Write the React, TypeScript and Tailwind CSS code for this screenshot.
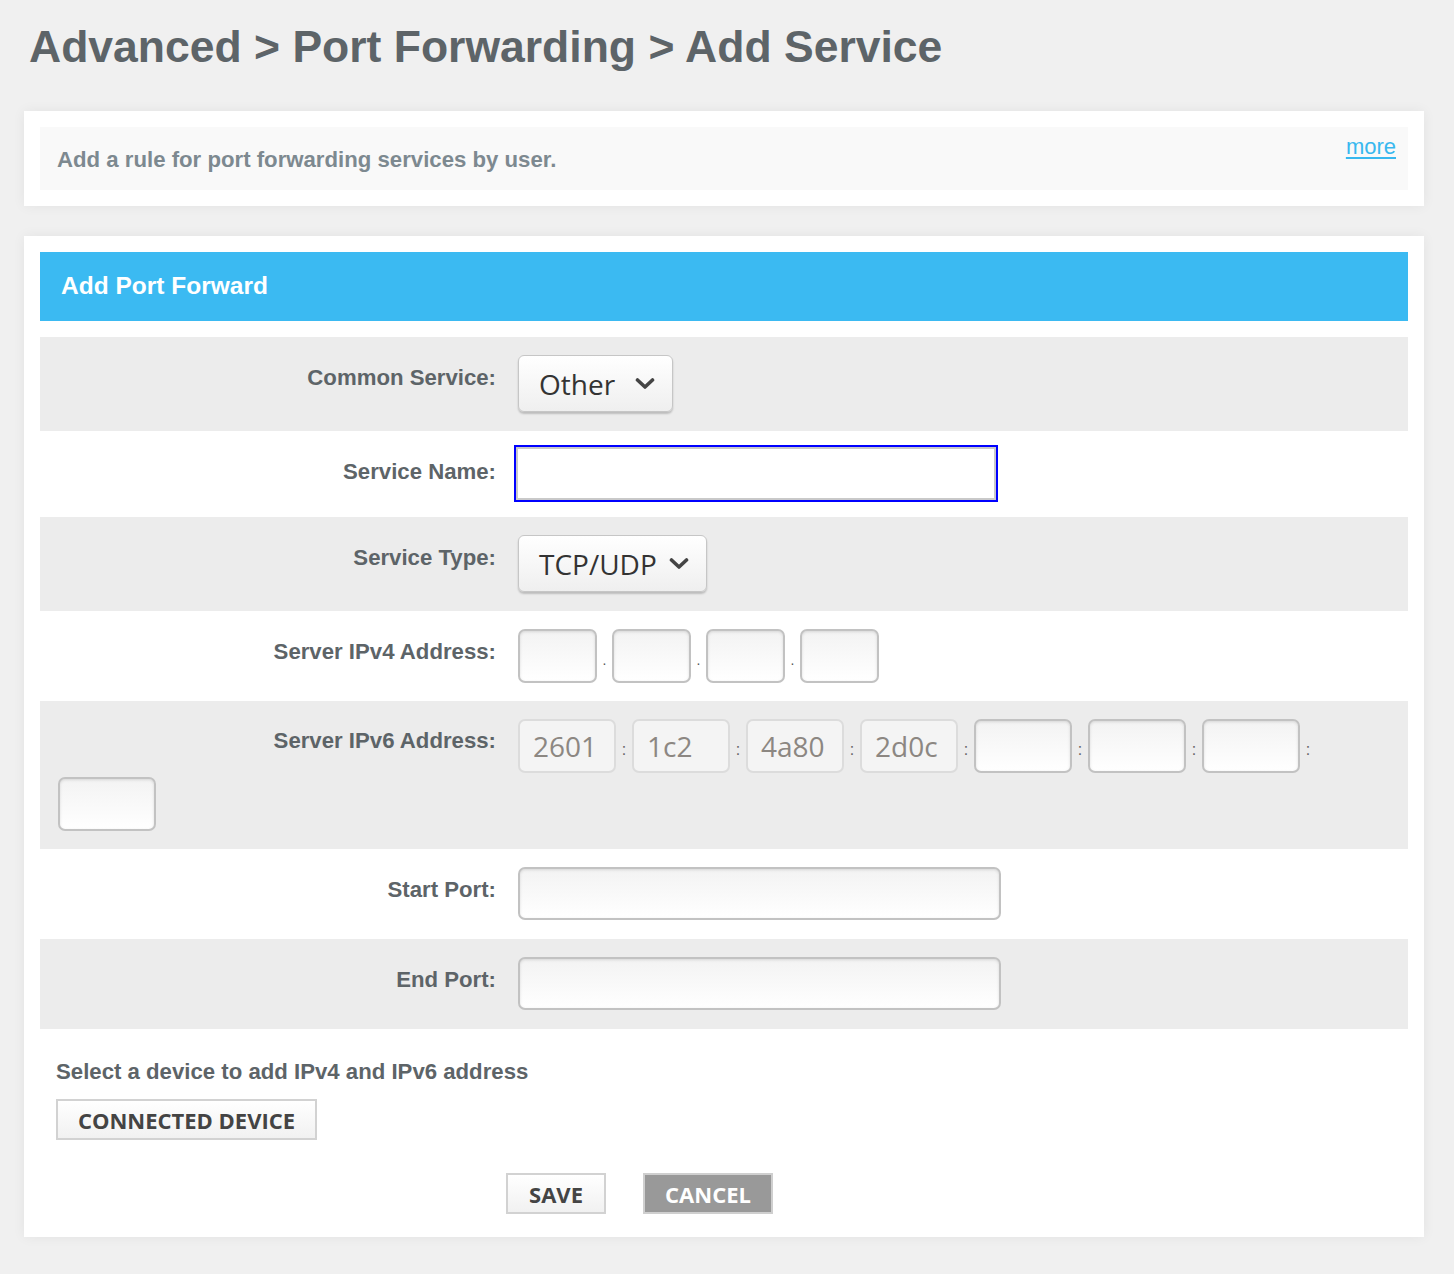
import React from "react";

const arial = { fontFamily: '"Liberation Sans", Arial, sans-serif' };
const open = { fontFamily: '"Open Sans", "Liberation Sans", sans-serif' };

const Chevron = () => (
  <svg width="20" height="14" viewBox="0 0 20 14" className="ml-auto">
    <polyline points="2.5,3 10,10 17.5,3" fill="none" stroke="#444" strokeWidth="3.6" strokeLinecap="round" strokeLinejoin="round" />
  </svg>
);

const Select = ({ value, width }: { value: string; width: string }) => (
  <div
    className={`${width} h-[57px] flex items-center pl-[20px] pr-[17px] rounded-[6px] border border-[#c6c6c6] bg-linear-to-b from-white to-[#efefef] shadow-[0_2px_2px_rgba(0,0,0,0.2)] text-[28px] text-[#333]`}
    style={open}
  >
    <span className="leading-none">{value}</span>
    <Chevron />
  </div>
);

const Box = ({ w, h = "h-[54px]" }: { w: string; h?: string }) => (
  <div className={`${w} ${h} rounded-[7px] border-2 border-[#c2c2c2] bg-linear-to-b from-[#f3f3f3] to-white shadow-[inset_0_1px_3px_rgba(0,0,0,0.12)]`} />
);

const Label = ({ children }: { children: React.ReactNode }) => (
  <div className="w-[438px] shrink-0 text-right font-bold text-[22.2px] leading-[24px] pt-[11px] text-[#5d6468]" style={arial}>
    {children}
  </div>
);

// rows take their own vertical padding so no two pt/pb classes fight
const Row = ({ gray, children, pad = "pt-[18px] pb-[18px]", cls = "" }: { gray?: boolean; children: React.ReactNode; pad?: string; cls?: string }) => (
  <div className={`flex items-start px-[18px] ${pad} ${gray ? "bg-[#ececec]" : "bg-white"} ${cls}`}>{children}</div>
);

export default function App() {
  const v6 = ["2601", "1c2", "4a80", "2d0c", "", "", "", ""];
  return (
    <div className="min-h-[1274px] bg-[#f0f0f0] pb-[37px]" style={arial}>
      {/* title */}
      <h1 className="pl-[29px] pt-[22px] text-[44.5px] leading-[50px] font-bold text-[#5d6468]">
        Advanced &gt; Port Forwarding &gt; Add Service
      </h1>

      {/* help card */}
      <div className="mt-[39px] ml-[24px] w-[1400px] bg-white p-[16px] shadow-[0_0_12px_rgba(0,0,0,0.06)]">
        <div className="h-[63px] bg-[#f9f9f9] flex justify-between items-start pl-[17px] pr-[12px]">
          <p className="pt-[21px] text-[22.2px] leading-[24px] font-bold text-[#7d8990]">
            Add a rule for port forwarding services by user.
          </p>
          <a href="#" className="pt-[7px] text-[22px] leading-[26px] text-[#38b8ef] underline underline-offset-[3px]">
            more
          </a>
        </div>
      </div>

      {/* form card */}
      <div className="mt-[30px] ml-[24px] w-[1400px] bg-white pt-[16px] px-[16px] pb-[23px] shadow-[0_0_12px_rgba(0,0,0,0.06)]">
        <div className="h-[69px] bg-[#3bbaf2] flex items-center pl-[21px] text-white font-bold text-[24.5px]">
          Add Port Forward
        </div>

        <div className="mt-[16px]">
          <Row gray pad="pt-[18px] pb-[19px]">
            <Label>Common Service:</Label>
            <div className="ml-[22px]">
              <Select value="Other" width="w-[155px]" />
            </div>
          </Row>

          <Row pad="pt-[14px] pb-[15px]">
            <div className="pt-[4px]">
              <Label>Service Name:</Label>
            </div>
            <div className="ml-[18px] w-[484px] h-[57px] border-2 border-[#0000ff]">
              <div className="h-full border-2 border-[#c9c9c9] bg-white" />
            </div>
          </Row>

          <Row gray pad="pt-[18px] pb-[19px]">
            <Label>Service Type:</Label>
            <div className="ml-[22px]">
              <Select value="TCP/UDP" width="w-[189px]" />
            </div>
          </Row>

          <Row>
            <Label>Server IPv4 Address:</Label>
            <div className="ml-[22px] flex items-end">
              {[0, 1, 2, 3].map((i) => (
                <React.Fragment key={i}>
                  <Box w="w-[79px]" />
                  {i < 3 && <span className="w-[15px] text-center text-[14px] leading-none pb-[16px] text-[#555]">.</span>}
                </React.Fragment>
              ))}
            </div>
          </Row>

          <Row gray cls="flex-wrap gap-y-[4px]">
            <Label>
              <span className="relative -top-[1px]">Server IPv6 Address:</span>
            </Label>
            {v6.map((val, i) => (
              <div key={i} className={`flex items-center ${i === 0 ? "ml-[22px]" : ""}`}>
                {val ? (
                  <div
                    className="w-[98px] h-[54px] rounded-[7px] border-2 border-[#dcdcdc] bg-[#f4f4f4] flex items-center pl-[13px] text-[28px] text-[#8c8782]"
                    style={open}
                  >
                    {val}
                  </div>
                ) : (
                  <Box w="w-[98px]" />
                )}
                {i < 7 && <span className="w-[16px] text-center text-[16px] leading-none mt-[8px] text-[#666]">:</span>}
              </div>
            ))}
          </Row>

          <Row pad="pt-[18px] pb-[19px]">
            <Label>Start Port:</Label>
            <div className="ml-[22px]">
              <Box w="w-[483px]" h="h-[53px]" />
            </div>
          </Row>

          <Row gray pad="pt-[18px] pb-[19px]">
            <Label>End Port:</Label>
            <div className="ml-[22px]">
              <Box w="w-[483px]" h="h-[53px]" />
            </div>
          </Row>
        </div>

        {/* device picker */}
        <div className="pl-[16px] pt-[31px]">
          <p className="text-[22.2px] leading-[24px] font-bold text-[#5d6468]">Select a device to add IPv4 and IPv6 address</p>
          <button
            className="mt-[15px] h-[41px] w-[261px] border-2 border-[#d2d2d2] bg-linear-to-b from-white to-[#f1f1f1] text-[22px] font-bold text-[#444] leading-none"
            style={open}
          >
            CONNECTED DEVICE
          </button>
        </div>

        <div className="flex gap-[37px] pl-[466px] mt-[33px]">
          <button
            className="h-[41px] w-[100px] border-2 border-[#d2d2d2] bg-linear-to-b from-white to-[#f1f1f1] text-[22px] font-bold text-[#444] leading-none"
            style={open}
          >
            SAVE
          </button>
          <button
            className="h-[41px] w-[130px] border-2 border-[#cfcfcf] bg-[#999999] text-[22px] font-bold text-white leading-none"
            style={open}
          >
            CANCEL
          </button>
        </div>
      </div>
    </div>
  );
}
